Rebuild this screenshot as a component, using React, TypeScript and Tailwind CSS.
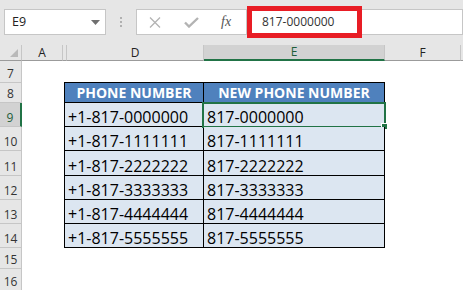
import React from "react";

type Row = {
  n: number;
  h: string;
  kind: "blank" | "top" | "head" | "data";
  d?: string;
  e?: string;
  sel?: boolean;
  last?: boolean;
};

const rows: Row[] = [
  { n: 7, h: "h-[22px]", kind: "top" },
  { n: 8, h: "h-[20px]", kind: "head" },
  { n: 9, h: "h-[24px]", kind: "data", d: "+1-817-0000000", e: "817-0000000", sel: true },
  { n: 10, h: "h-[24px]", kind: "data", d: "+1-817-1111111", e: "817-1111111" },
  { n: 11, h: "h-[25px]", kind: "data", d: "+1-817-2222222", e: "817-2222222" },
  { n: 12, h: "h-[24px]", kind: "data", d: "+1-817-3333333", e: "817-3333333" },
  { n: 13, h: "h-[24px]", kind: "data", d: "+1-817-4444444", e: "817-4444444" },
  { n: 14, h: "h-[24px]", kind: "data", d: "+1-817-5555555", e: "817-5555555", last: true },
  { n: 15, h: "h-[21px]", kind: "blank" },
  { n: 16, h: "h-[22px]", kind: "blank" },
];

function FormulaBar() {
  return (
    <div className="relative flex h-[45px] items-start bg-[#e6e6e6] pt-[9px]">
      {/* name box */}
      <div className="ml-[4px] flex h-[26px] w-[102px] items-center justify-between border border-[#c6c6c6] bg-white pl-[7px] pr-[5px]">
        <span className="text-[12.5px] leading-none text-[#222]">E9</span>
        <svg width="9" height="5" viewBox="0 0 9 5">
          <path d="M0 0 L9 0 L4.5 5 Z" fill="#6f6f6f" />
        </svg>
      </div>
      <div className="flex h-[26px] w-[30px] flex-col items-center justify-center gap-[2px]">
        <div className="h-[2px] w-[2px] bg-[#b0b0b0]" />
        <div className="h-[2px] w-[2px] bg-[#b0b0b0]" />
        <div className="h-[2px] w-[2px] bg-[#b0b0b0]" />
      </div>
      {/* cancel / enter / fx */}
      <div className="flex h-[26px] w-[111px] items-center border border-[#c6c6c6] bg-white">
        <svg className="ml-[12px]" width="12" height="11" viewBox="0 0 12 11">
          <path d="M1 0.5 L11 10.5 M11 0.5 L1 10.5" stroke="#b3b3b3" strokeWidth="1.3" />
        </svg>
        <svg className="ml-[23px]" width="15" height="11" viewBox="0 0 15 11">
          <path d="M1 5.5 L5 9.5 L14 1" stroke="#b3b3b3" strokeWidth="2.4" fill="none" />
        </svg>
        <span className="ml-[22px] font-['Liberation_Serif',serif] text-[14px] italic leading-none text-[#555]">
          fx
        </span>
      </div>
      {/* formula input */}
      <div className="flex h-[26px] flex-1 items-center border border-l-0 border-[#c6c6c6] bg-white pl-[15px]">
        <span className="text-[12px] leading-none text-[#333]">817-0000000</span>
      </div>
      {/* red highlight */}
      <div className="absolute left-[247px] top-[6px] h-[32px] w-[115px] border-[5px] border-[#e81d25]" />
    </div>
  );
}

function ColumnHeaders() {
  const cell = "flex h-full items-center justify-center border-r border-[#c6c6c6] border-b border-b-[#9b9b9b]";
  return (
    <div className="flex h-[16px] bg-[#e6e6e6] text-[12px] text-[#222]">
      <div className={`${cell} relative w-[22px]`}>
        <svg className="absolute bottom-[3px] right-[3px]" width="8" height="8" viewBox="0 0 8 8">
          <path d="M8 0 L8 8 L0 8 Z" fill="#b9b9b9" />
        </svg>
      </div>
      <div className={`${cell} w-[41px]`}>A</div>
      <div className={`${cell} w-[4px]`} />
      <div className={`${cell} w-[137px]`}>D</div>
      <div className="flex h-full w-[181px] items-center justify-center border-r border-[#c6c6c6] border-b-2 border-b-[#217346] bg-[#d2d2d2] text-[#1e5e3a]">
        E
      </div>
      <div className={`${cell} w-[76px]`}>F</div>
      <div className="h-full flex-1 border-b border-[#9b9b9b]" />
    </div>
  );
}

function SheetRow({ r }: { r: Row }) {
  const rowHead = r.sel
    ? "bg-[#d2d2d2] border-r-2 border-r-[#217346] text-[#1e5e3a]"
    : "bg-[#e6e6e6] border-r border-r-[#c6c6c6] text-[#333]";

  let dCell = "w-[140px]";
  let eCell = "w-[181px]";
  if (r.kind === "top") {
    dCell += " border-b border-black";
    eCell += " border-b border-black";
  }
  if (r.kind === "head" || r.kind === "data") {
    dCell += " border-l border-r border-b border-black";
    eCell += " border-r border-b border-black";
  }
  if (r.kind === "head") {
    dCell += " bg-[#4f81bd]";
    eCell += " bg-[#4f81bd]";
  }
  if (r.kind === "data") {
    dCell += " bg-[#dce6f1]";
    eCell += " bg-[#dce6f1]";
  }

  return (
    <div className={`flex ${r.h}`}>
      <div
        className={`flex w-[22px] items-end justify-center border-b border-b-[#c6c6c6] pb-[1px] text-[12px] leading-[14px] ${rowHead}`}
      >
        {r.n}
      </div>
      <div className="w-[42px]" />
      {r.kind === "head" ? (
        <>
          <div className={`flex items-center justify-center text-[14px] font-bold text-white ${dCell}`}>
            PHONE NUMBER
          </div>
          <div className={`flex items-center justify-center text-[14px] font-bold text-white ${eCell}`}>
            NEW PHONE NUMBER
          </div>
        </>
      ) : (
        <>
          <div className={`flex items-end pl-[3px] text-[16px] leading-[18px] text-black ${dCell}`}>{r.d}</div>
          <div className={`relative flex items-end pl-[3px] text-[16px] leading-[18px] text-black ${eCell}`}>
            {r.e}
            {r.sel && (
              <>
                <div className="absolute -bottom-[2px] -left-[2px] -right-[2px] -top-[1px] border-2 border-[#217346]" />
                <div className="absolute -bottom-[4px] -right-[4px] h-[7px] w-[7px] border border-white bg-[#217346]" />
              </>
            )}
          </div>
        </>
      )}
      <div className="flex-1" />
    </div>
  );
}

export default function App() {
  return (
    <div className="h-[290px] w-[463px] overflow-hidden bg-white font-['Open_Sans',sans-serif]">
      <FormulaBar />
      <ColumnHeaders />
      {rows.map((r) => (
        <SheetRow key={r.n} r={r} />
      ))}
    </div>
  );
}
